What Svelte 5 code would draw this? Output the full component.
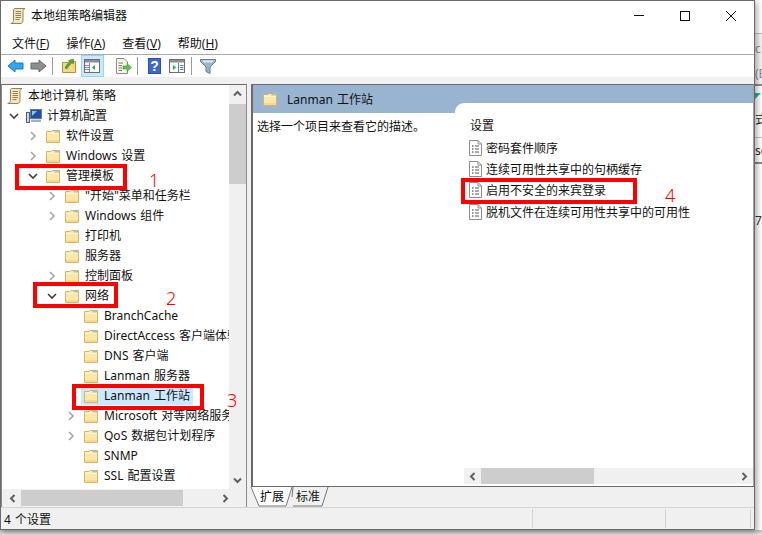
<script>
  // tree rows of the policy editor: d = depth, a = arrow (r, d or none)
  const rows = [
    { t: '本地计算机 策略', d: 0, icon: 'scroll' },
    { t: '计算机配置', d: 1, a: 'd', icon: 'pc' },
    { t: '软件设置', d: 2, a: 'r' },
    { t: 'Windows 设置', d: 2, a: 'r' },
    { t: '管理模板', d: 2, a: 'd' },
    { t: '"开始"菜单和任务栏', d: 3, a: 'r' },
    { t: 'Windows 组件', d: 3, a: 'r' },
    { t: '打印机', d: 3 },
    { t: '服务器', d: 3 },
    { t: '控制面板', d: 3, a: 'r' },
    { t: '网络', d: 3, a: 'd' },
    { t: 'BranchCache', d: 4 },
    { t: 'DirectAccess 客户端体验设置', d: 4 },
    { t: 'DNS 客户端', d: 4 },
    { t: 'Lanman 服务器', d: 4 },
    { t: 'Lanman 工作站', d: 4, sel: true },
    { t: 'Microsoft 对等网络服务', d: 4, a: 'r' },
    { t: 'QoS 数据包计划程序', d: 4, a: 'r' },
    { t: 'SNMP', d: 4 },
    { t: 'SSL 配置设置', d: 4 }
  ];

  const settings = ['密码套件顺序', '连续可用性共享中的句柄缓存', '启用不安全的来宾登录', '脱机文件在连续可用性共享中的可用性'];

  const indent = (d) => (d === 0 ? 3 : 6 + (d - 1) * 19);
</script>

{#snippet folder()}
  <svg class="ico" width="16" height="16" viewBox="0 0 16 16">
    <path d="M1.5 3.5V14.5H14.5V2.5H7L6 3.5Z" fill="#fbe8a9" stroke="#d6b469" />
    <path d="M2 4.5H14V6H2Z" fill="#fdf3cc" />
    <path d="M2 12H14V14H2Z" fill="#f6d98c" />
    <path d="M9.5 3H14V4.5H9.5Z" fill="#8ecbea" />
  </svg>
{/snippet}

{#snippet scroll()}
  <svg class="ico" width="16" height="16" viewBox="0 0 16 16">
    <path d="M4.5 .5H15C14 1 13 2 13 3.5V12.5C13 14.5 12 15.5 10 15.5H.8C2.5 15 3.5 14 3.5 12.5V2C3.5 1.2 4 .5 4.5 .5Z" fill="#f3e6bd" stroke="#94835a" />
    <path d="M5.5 3.5H11M5.5 5.5H11M5.5 7.5H11M5.5 9.5H11M5.5 11.5H9.5" stroke="#8d8468" />
  </svg>
{/snippet}

{#snippet chevron(dir)}
  <svg class="arrow" width="12" height="12" viewBox="0 0 12 12">
    {#if dir === 'd'}
      <path d="M2 4L6 8L10 4" fill="none" stroke="#404040" stroke-width="1.6" />
    {:else if dir === 'r'}
      <path d="M4 2L8 6L4 10" fill="none" stroke="#a6a6a6" stroke-width="1.6" />
    {/if}
  </svg>
{/snippet}

{#snippet sb(dir)}
  <svg width="9" height="9" viewBox="0 0 9 9">
    {#if dir === 'u'}<path d="M1 6.5L4.5 3L8 6.5" fill="none" stroke="#606060" stroke-width="2" />{/if}
    {#if dir === 'd'}<path d="M1 2.5L4.5 6L8 2.5" fill="none" stroke="#606060" stroke-width="2" />{/if}
    {#if dir === 'l'}<path d="M6.5 1L3 4.5L6.5 8" fill="none" stroke="#606060" stroke-width="2" />{/if}
    {#if dir === 'r'}<path d="M2.5 1L6 4.5L2.5 8" fill="none" stroke="#606060" stroke-width="2" />{/if}
  </svg>
{/snippet}

<div class="shot">
  <div class="top">
    <div class="window">
      <div class="titlebar">
        <span class="title-ico">{@render scroll()}</span>
        <span class="title">本地组策略编辑器</span>
        <div class="controls">
          <span class="ctl"><svg width="12" height="12" viewBox="0 0 12 12"><path d="M1 5.5H11" stroke="#111" /></svg></span>
          <span class="ctl"><svg width="12" height="12" viewBox="0 0 12 12"><rect x="1.5" y="1.5" width="9" height="9" fill="none" stroke="#111" /></svg></span>
          <span class="ctl"><svg width="12" height="12" viewBox="0 0 12 12"><path d="M1 1L11 11M11 1L1 11" stroke="#111" /></svg></span>
        </div>
      </div>

      <div class="menubar">
        <span>文件(<u>F</u>)</span>
        <span>操作(<u>A</u>)</span>
        <span>查看(<u>V</u>)</span>
        <span>帮助(<u>H</u>)</span>
      </div>

      <div class="toolbar">
        <span class="tool">
          <svg width="17" height="14" viewBox="0 0 17 14"><path d="M1 7L8 1V4H16V10H8V13Z" fill="#35a5ef" stroke="#1c76c4" /></svg>
        </span>
        <span class="tool">
          <svg width="17" height="14" viewBox="0 0 17 14"><path d="M16 7L9 1V4H1V10H9V13Z" fill="#8f8f8f" stroke="#666" /></svg>
        </span>
        <span class="sep"></span>
        <span class="tool">
          <svg width="16" height="16" viewBox="0 0 16 16">
            <path d="M1.5 4.5V14.5H14.5V3.5H8L7 4.5Z" fill="#f5d888" stroke="#b58f3c" />
            <path d="M4 10C5 7 7 5 9 4L7.5 2.5L12.5 1L12.5 6L11 4.8C9 6.5 7 9 6 11Z" fill="#52a832" stroke="#3b7f22" stroke-width=".5" />
          </svg>
        </span>
        <span class="tool on">
          <svg width="16" height="14" viewBox="0 0 16 14">
            <rect x=".5" y=".5" width="15" height="13" fill="#f8f8f8" stroke="#6d6d6d" />
            <path d="M1 1H15V3.5H1Z" fill="#8a8f96" />
            <path d="M5.5 4V13M1 6.5H5M1 8.5H5M1 10.5H5" stroke="#8a8f96" />
            <path d="M11 6V11L8 8.5Z" fill="#27a84a" />
          </svg>
        </span>
        <span class="tool after-on">
          <svg width="17" height="16" viewBox="0 0 17 16">
            <path d="M1.5 .5H9L12.5 4V15.5H1.5Z" fill="#faf6e8" stroke="#8e8b80" />
            <path d="M3.5 5H8M3.5 7.5H7M3.5 10H7M3.5 12.5H7" stroke="#777" />
            <path d="M8 8H12V5.5L16.5 9.5L12 13.5V11H8Z" fill="#5cc04a" stroke="#3c9a32" stroke-width=".6" />
          </svg>
        </span>
        <span class="sep"></span>
        <span class="tool">
          <svg width="13" height="16" viewBox="0 0 13 16">
            <rect width="13" height="16" fill="#2b50b4" />
            <rect x="1" y="1" width="11" height="14" fill="#4068c9" />
            <text x="6.5" y="13" text-anchor="middle" font-family="Liberation Sans, sans-serif" font-size="14" font-weight="700" fill="#fff">?</text>
          </svg>
        </span>
        <span class="tool">
          <svg width="16" height="14" viewBox="0 0 16 14">
            <rect x=".5" y=".5" width="15" height="13" fill="#f8f8f8" stroke="#6d6d6d" />
            <path d="M1 1H15V3.5H1Z" fill="#8a8f96" />
            <path d="M9.5 4V13M11 6.5H14.5M11 8.5H14.5M11 10.5H14.5" stroke="#5b7b9b" />
            <path d="M4 6V11L7 8.5Z" fill="#27a84a" />
          </svg>
        </span>
        <span class="sep"></span>
        <span class="tool">
          <svg width="16" height="15" viewBox="0 0 16 15">
            <path d="M.5 .5H15.5V2.5L10 8V14.5L6 12.5V8L.5 2.5Z" fill="#9ab4c6" stroke="#5f7f93" />
            <path d="M2 1.5H14L12 3.5H4Z" fill="#dfeaf0" />
          </svg>
        </span>
      </div>

      <div class="panes">
        <div class="left">
          <div class="left-main">
            <div class="tree">
              {#each rows as row}
                <div class="row" style:padding-left="{indent(row.d)}px">
                  {#if row.d > 0}{@render chevron(row.a)}{/if}
                  <span class="item" class:sel={row.sel}>
                    {#if row.icon === 'scroll'}
                      {@render scroll()}
                    {:else if row.icon === 'pc'}
                      <svg class="ico" width="16" height="16" viewBox="0 0 16 16">
                        <rect x="4.5" y="1.5" width="11" height="9" fill="#1f4fa8" stroke="#6e7a86" />
                        <path d="M6 3H11L6 8Z" fill="#8ec5f2" />
                        <path d="M5 11.5H15V14H5Z" fill="#a8b0b8" />
                        <rect x=".5" y="4.5" width="3" height="10" fill="#cfd6dc" stroke="#4b5f76" />
                      </svg>
                    {:else}
                      {@render folder()}
                    {/if}
                    <span class="label">{row.t}</span>
                  </span>
                </div>
              {/each}
            </div>
            <div class="vscroll">
              <span class="sb-btn">{@render sb('u')}</span>
              <div class="vtrack"><div class="vthumb"></div></div>
              <span class="sb-btn">{@render sb('d')}</span>
            </div>
          </div>
          <div class="hscroll">
            <span class="sb-btn wide">{@render sb('l')}</span>
            <div class="htrack"><div class="hthumb"></div></div>
            <span class="sb-btn wide">{@render sb('r')}</span>
          </div>
        </div>

        <div class="right">
          <div class="detail">
            <div class="head">
              {@render folder()}
              <span>Lanman 工作站</span>
            </div>
            <div class="body">
              <div class="desc">选择一个项目来查看它的描述。</div>
              <div class="list">
                <div class="list-head">设置</div>
                {#each settings as s}
                  <div class="setting">
                    <svg width="13" height="16" viewBox="0 0 13 16">
                      <path d="M.5 .5H9L12.5 4V15.5H.5Z" fill="#fff" stroke="#8d8d8d" />
                      <path d="M9 .5V4H12.5" fill="none" stroke="#8d8d8d" />
                      <path d="M3 6H4.5M3 9H4.5M3 12H4.5" stroke="#222" />
                      <path d="M6 6H10M6 9H10M6 12H10" stroke="#555" />
                    </svg>
                    <span>{s}</span>
                  </div>
                {/each}
                <div class="list-fill"></div>
                <div class="list-scroll">
                  <span class="sb-btn wide">{@render sb('l')}</span>
                  <div class="ltrack"><div class="lthumb"></div></div>
                  <span class="sb-btn wide">{@render sb('r')}</span>
                </div>
              </div>
            </div>
          </div>
          <div class="tabs">
            <div class="tab active">
              <svg width="42" height="20" viewBox="0 0 42 20"><path d="M0 0L8 19H35L41 0" fill="#fff" stroke="#777" /></svg>
              <span>扩展</span>
            </div>
            <div class="tab other">
              <svg width="36" height="20" viewBox="0 0 36 20"><path d="M-1 10L0 0M0 19H29L35 0" fill="none" stroke="#777" /></svg>
              <span>标准</span>
            </div>
          </div>
        </div>
      </div>

      <div class="status">
        <span class="st a">4 个设置</span>
        <span class="st b"></span>
        <span class="st c"></span>
      </div>

      <!-- annotations painted over the screenshot -->
      <div class="mark m1"></div>
      <div class="mark m2"></div>
      <div class="mark m3"></div>
      <div class="mark m4"></div>
      <span class="num n1">1</span>
      <span class="num n2">2</span>
      <span class="num n3">3</span>
      <span class="num n4">4</span>
    </div>

    <div class="behind">
      <div class="s1"></div>
      <div class="s2"><span class="c1">c</span><span class="c2">(E</span></div>
      <div class="s3"><i></i><span>式</span></div>
      <div class="s4"><span>se</span></div>
      <div class="s5"><span>7(</span></div>
    </div>
  </div>
  <div class="foot"></div>
</div>

<style>
  :global(body) {
    background: #fff;
  }

  .shot {
    width: 762px;
    height: 535px;
    overflow: hidden;
    display: flex;
    flex-direction: column;
    font-family: "Noto Sans", "Noto Sans CJK SC", sans-serif;
    font-size: 12px;
    color: #111;
    word-spacing: 1px;
  }

  .top {
    display: flex;
    height: 530px;
  }

  .window {
    position: relative;
    z-index: 1;
    box-sizing: border-box;
    width: 755px;
    height: 530px;
    display: flex;
    flex-direction: column;
    background: #fff;
    border: 1px solid #6a6a6a;
    box-shadow: 2px 2px 6px rgba(0, 0, 0, 0.35);
  }

  .titlebar {
    height: 31px;
    box-sizing: border-box;
    display: flex;
    align-items: center;
    padding: 0 0 2px 9px;
  }

  .title-ico {
    display: flex;
  }

  .title {
    line-height: 28px;
  }

  .controls {
    margin-left: auto;
    display: flex;
  }

  .ctl {
    width: 46px;
    height: 28px;
    display: flex;
    align-items: center;
    justify-content: center;
  }

  .menubar {
    height: 22px;
    display: flex;
    gap: 17px;
    align-items: center;
    padding-left: 11px;
  }

  .toolbar {
    height: 23px;
    box-sizing: border-box;
    border-top: 1px solid #ababab;
    display: flex;
    align-items: center;
    padding-left: 2.5px;
  }

  .tool {
    width: 23px;
    height: 22px;
    box-sizing: border-box;
    display: flex;
    align-items: center;
    justify-content: center;
  }

  .tool.on {
    background: #cce8ff;
    border: 1px solid #99d1ff;
  }

  .after-on {
    margin-left: 8px;
  }

  .sep {
    width: 1px;
    height: 18px;
    background: #9a9a9a;
    margin: 0 5px 0 2px;
  }

  .panes {
    flex: 1;
    min-height: 0;
    display: flex;
    background: #f0f0f0;
    padding-top: 7px;
  }

  .left {
    width: 246px;
    box-sizing: border-box;
    display: flex;
    flex-direction: column;
    border: 1px solid #8a8a8a;
    border-bottom: 0;
    border-top-color: #6a6a6a;
    background: #fff;
  }

  .left-main {
    flex: 1;
    min-height: 0;
    display: flex;
  }

  .tree {
    flex: 1;
    min-width: 0;
    overflow: hidden;
    padding-top: 1px;
  }

  .row {
    height: 20px;
    display: flex;
    align-items: center;
    white-space: nowrap;
  }

  .arrow {
    flex: none;
    margin-right: 4px;
  }

  .item {
    display: flex;
    align-items: center;
    height: 18px;
    padding: 0 3px 0 2px;
  }

  .item.sel {
    background: #cce8ff;
  }

  .ico {
    flex: none;
    margin-right: 5px;
  }

  .label {
    line-height: 20px;
  }

  .vscroll {
    width: 17px;
    display: flex;
    flex-direction: column;
    background: #f0f0f0;
  }

  .sb-btn {
    height: 17px;
    display: flex;
    align-items: center;
    justify-content: center;
    flex: none;
  }

  .sb-btn.wide {
    width: 17px;
    height: 16px;
  }

  .vtrack {
    flex: 1;
    padding-top: 2px;
  }

  .vthumb {
    height: 80px;
    background: #cdcdcd;
  }

  .hscroll {
    height: 18px;
    box-sizing: border-box;
    display: flex;
    align-items: center;
    background: #f0f0f0;
    padding-left: 2px;
  }

  .htrack {
    width: 196px;
  }

  .hthumb {
    width: 162px;
    height: 16px;
    background: #cdcdcd;
  }

  .right {
    flex: 1;
    min-width: 0;
    margin-left: 4px;
    display: flex;
    flex-direction: column;
  }

  .detail {
    flex: 1;
    min-height: 0;
    display: flex;
    flex-direction: column;
    background: #fff;
    border: 1px solid #6a6a6a;
    border-width: 1px 1px 0 2px;
    border-right-color: #a0a0a0;
    padding-bottom: 2px;
  }

  .head {
    height: 28px;
    flex: none;
    display: flex;
    align-items: center;
    background: #99b4d1;
    padding-left: 9px;
  }

  .head .ico {
    margin-right: 9px;
  }

  .body {
    flex: 1;
    min-height: 0;
    display: flex;
  }

  .desc {
    width: 202px;
    flex: none;
    padding: 5px 0 0 4px;
    box-sizing: border-box;
    line-height: 18px;
  }

  .list {
    position: relative;
    flex: 1;
    margin-top: -10px;
    background: #fff;
    border-top-left-radius: 9px;
    padding-top: 14px;
    display: flex;
    flex-direction: column;
  }

  .list-head {
    height: 18px;
    line-height: 18px;
    padding-left: 15px;
    margin-bottom: 2px;
  }

  .setting {
    height: 21.33px;
    display: flex;
    align-items: center;
    gap: 4px;
    padding-left: 14px;
    white-space: nowrap;
  }

  .list-fill {
    flex: 1;
  }

  .list-scroll {
    margin-left: 9px;
    height: 16px;
    display: flex;
    align-items: center;
    background: #f0f0f0;
  }

  .ltrack {
    flex: 1;
  }

  .lthumb {
    width: 113px;
    height: 16px;
    background: #cdcdcd;
  }

  .tabs {
    height: 21px;
    flex: none;
    box-sizing: border-box;
    display: flex;
    border-top: 1px solid #6a6a6a;
    background: #f0f0f0;
  }

  .tab {
    position: relative;
    height: 20px;
    line-height: 19px;
    text-align: center;
  }

  .tab svg {
    position: absolute;
    left: 0;
    top: 0;
    overflow: visible;
  }

  .tab span {
    position: relative;
  }

  .tab.active {
    width: 42px;
  }

  .tab.other {
    width: 30px;
    padding-right: 6px;
  }

  .status {
    height: 22px;
    flex: none;
    box-sizing: border-box;
    display: flex;
    background: #f0f0f0;
    border-top: 1px solid #d4d4d4;
    line-height: 21px;
  }

  .st {
    box-sizing: border-box;
    border-right: 1px solid #d4d4d4;
    margin: 1px 0;
  }

  .st.a {
    width: 532px;
    padding-left: 3px;
  }

  .st.b {
    width: 133px;
  }

  .st.c {
    width: 85px;
  }

  .mark {
    position: absolute;
    box-sizing: border-box;
    border: 4px solid #f00;
    pointer-events: none;
  }

  .m1 {
    left: 14px;
    top: 163px;
    width: 112px;
    height: 26px;
  }

  .m2 {
    left: 32px;
    top: 281px;
    width: 85px;
    height: 26px;
  }

  .m3 {
    left: 71px;
    top: 383px;
    width: 132px;
    height: 26px;
  }

  .m4 {
    left: 460px;
    top: 177px;
    width: 176px;
    height: 26px;
  }

  .num {
    position: absolute;
    color: #f00;
    font-size: 18px;
    line-height: 18px;
    font-weight: 300;
  }

  .n1 {
    left: 148px;
    top: 170px;
  }

  .n2 {
    left: 165px;
    top: 288px;
  }

  .n3 {
    left: 226px;
    top: 390px;
  }

  .n4 {
    left: 664px;
    top: 185px;
  }

  .behind {
    width: 7px;
    display: flex;
    flex-direction: column;
    overflow: hidden;
    font-size: 12px;
    line-height: 12px;
    white-space: nowrap;
  }

  .s1 {
    height: 33px;
    flex: none;
    border-bottom: 1px solid #bbb;
  }

  .s2 {
    height: 50px;
    flex: none;
    background: #f4f4f4;
    color: #8a8f98;
    padding-top: 9px;
    box-sizing: border-box;
    display: flex;
    flex-direction: column;
    gap: 13px;
  }

  .s3 {
    height: 54px;
    flex: none;
    box-sizing: border-box;
    border-top: 2px solid #8a8a8a;
    border-bottom: 1px solid #c8c8c8;
    padding-top: 7px;
    display: flex;
    flex-direction: column;
    gap: 15px;
    color: #222;
  }

  .s3 i {
    width: 0;
    height: 0;
    border-top: 6px solid #1fb5a6;
    border-right: 6px solid transparent;
  }

  .s4 {
    height: 26px;
    flex: none;
    box-sizing: border-box;
    border-bottom: 2px solid #8a8a8a;
    padding-top: 7px;
    color: #222;
  }

  .s5 {
    flex: 1;
    padding-top: 51px;
    color: #333;
  }

  .foot {
    height: 5px;
    flex: none;
    background: linear-gradient(#bdbdbd, #e6e6e6);
  }
</style>
